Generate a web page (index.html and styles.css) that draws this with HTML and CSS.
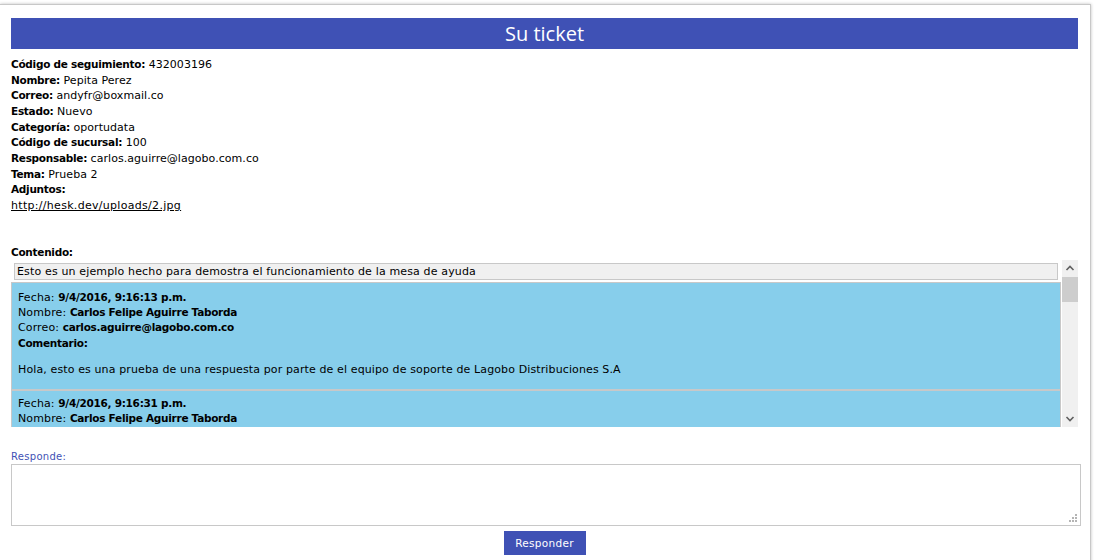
FILE: index.html
```html
<!DOCTYPE html>
<html lang="es">
<head>
<meta charset="utf-8">
<title>Su ticket</title>
<link rel="stylesheet" href="styles.css">
</head>
<body>
<div class="card">
  <h1 class="title">Su ticket</h1>
  <div class="fields">
    <div><b>Código de seguimiento:</b> 432003196</div>
    <div><b>Nombre:</b> Pepita Perez</div>
    <div><b>Correo:</b> andyfr@boxmail.co</div>
    <div><b>Estado:</b> Nuevo</div>
    <div><b>Categoría:</b> oportudata</div>
    <div><b>Código de sucursal:</b> 100</div>
    <div><b>Responsable:</b> carlos.aguirre@lagobo.com.co</div>
    <div><b>Tema:</b> Prueba 2</div>
    <div><b>Adjuntos:</b></div>
    <div><a href="#" class="link">http://hesk.dev/uploads/2.jpg</a></div>
  </div>
  <div class="label-bold">Contenido:</div>
  <div class="scrollbox">
    <div class="scroll-content">
      <div class="content-box">Esto es un ejemplo hecho para demostra el funcionamiento de la mesa de ayuda</div>
      <div class="msg">
        <div>Fecha: <b>9/4/2016, 9:16:13 p.m.</b></div>
        <div>Nombre: <b>Carlos Felipe Aguirre Taborda</b></div>
        <div>Correo: <b>carlos.aguirre@lagobo.com.co</b></div>
        <div><b>Comentario:</b></div>
        <p class="msg-text">Hola, esto es una prueba de una respuesta por parte de el equipo de soporte de Lagobo Distribuciones S.A</p>
      </div>
      <div class="msg msg-2">
        <div>Fecha: <b>9/4/2016, 9:16:31 p.m.</b></div>
        <div>Nombre: <b>Carlos Felipe Aguirre Taborda</b></div>
      </div>
    </div>
    <div class="scrollbar">
      <svg class="arrow" width="16" height="16" viewBox="0 0 16 16"><path d="M4.5 10 L8 6.5 L11.5 10" fill="none" stroke="#606060" stroke-width="1.6"/></svg>
      <div class="track"><div class="thumb"></div></div>
      <svg class="arrow" width="16" height="16" viewBox="0 0 16 16"><path d="M4.5 6 L8 9.5 L11.5 6" fill="none" stroke="#606060" stroke-width="1.6"/></svg>
    </div>
  </div>
  <label class="reply-label" for="reply">Responde:</label>
  <div class="reply-wrap">
    <textarea id="reply" class="reply"></textarea>
    <svg class="grip" width="8" height="8" viewBox="0 0 8 8"><rect x="6" y="0" width="2" height="2" fill="#b4b4b4"/><rect x="3" y="3" width="2" height="2" fill="#b4b4b4"/><rect x="6" y="3" width="2" height="2" fill="#b4b4b4"/><rect x="0" y="6" width="2" height="2" fill="#b4b4b4"/><rect x="3" y="6" width="2" height="2" fill="#b4b4b4"/><rect x="6" y="6" width="2" height="2" fill="#b4b4b4"/></svg>
  </div>
  <div class="actions"><button class="btn">Responder</button></div>
</div>
</body>
</html>
```
FILE: styles.css
```css
html, body {
  margin: 0;
  padding: 0;
  background: #ffffff;
  overflow: hidden;
}
body {
  font-family: "DejaVu Sans", Verdana, sans-serif;
  font-size: 11px;
  color: #000;
}
.card {
  margin-top: 4px;
  min-height: 600px;
  padding: 13px 12px 0 11px;
  box-sizing: border-box;
  width: 1091px;
  border-top: 1px solid #c8c8c8;
  border-right: 1px solid #c8c8c8;
  box-shadow: 0 0 3px rgba(0,0,0,0.25);
  background: #fff;
}
.title {
  margin: 0;
  height: 31px;
  line-height: 31px;
  background: #3f51b5;
  color: #fff;
  text-align: center;
  font-family: "Open Sans", "Noto Sans", sans-serif;
  font-weight: 400;
  font-size: 20px;
}
.fields {
  margin-top: 8px;
  line-height: 15.65px;
  font-size: 11px;
  letter-spacing: 0.05px;
}
.fields b,
.msg b,
.label-bold {
  font-weight: bold;
  font-size: 10.5px;
  letter-spacing: -0.28px;
}
.link { color: #000; text-decoration: underline; letter-spacing: 0.3px; }
.label-bold {
  margin-top: 30px;
  line-height: 16px;
}
.scrollbox {
  display: flex;
  height: 167px;
  width: 1067px;
}
.scroll-content {
  width: 1050px;
  overflow: hidden;
}
.content-box {
  margin: 3px 3px 2px 3px;
  height: 17px;
  box-sizing: border-box;
  border: 1px solid #c8c8c8;
  background: #f0f0f0;
  padding-left: 2px;
  line-height: 15px;
  font-size: 11px;
  letter-spacing: 0.15px;
}
.msg {
  background: #87ceeb;
  border: 1px solid #c8c8c8;
  padding: 7px 6px 11px 6px;
  line-height: 15.4px;
  font-size: 11px;
  letter-spacing: 0.12px;
}
.msg-2 { padding-top: 5px; }
.msg-text {
  margin: 11px 0 0 0;
}
.scrollbar {
  margin-left: 1px;
  width: 16px;
  background: #f0f0f0;
  display: flex;
  flex-direction: column;
}
.arrow { display: block; flex: none; }
.track { flex: 1; }
.thumb {
  margin-top: 1px;
  height: 25px;
  background: #cdcdcd;
}
.reply-label {
  display: block;
  margin-top: 23px;
  color: #3f51b5;
  font-size: 10px;
  line-height: 14px;
  letter-spacing: 0.3px;
}
.reply-wrap {
  position: relative;
  width: 1070px;
}
.reply {
  display: block;
  width: 1070px;
  height: 62px;
  box-sizing: border-box;
  border: 1px solid #c8c8c8;
  margin: 0;
  padding: 2px;
  resize: none;
  font-family: "DejaVu Sans", sans-serif;
}
.grip {
  position: absolute;
  right: 4px;
  bottom: 4px;
}
.actions {
  display: flex;
  justify-content: center;
  margin-top: 5px;
}
.btn {
  width: 82px;
  height: 24px;
  border: none;
  background: #3f51b5;
  color: #fff;
  font-family: "DejaVu Sans", sans-serif;
  font-size: 10.5px;
  letter-spacing: 0.3px;
  padding: 0;
}
```
